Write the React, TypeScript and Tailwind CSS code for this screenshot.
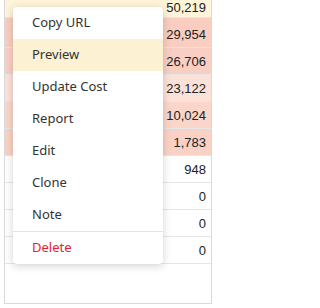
import React from 'react';

interface Row {
  value: string;
  bg: string;
  h: string;
}

const rows: Row[] = [
  { value: '29,954', bg: 'bg-[#f9cec1]', h: 'h-[30px] pt-[3px]' },
  { value: '26,706', bg: 'bg-[#f9cfc3]', h: 'h-[27px]' },
  { value: '23,122', bg: 'bg-[#fbe1d8]', h: 'h-[27px]' },
  { value: '10,024', bg: 'bg-[#fad5ca]', h: 'h-[27px]' },
  { value: '1,783', bg: 'bg-[#fad1c5]', h: 'h-[27px]' },
  { value: '948', bg: 'bg-white', h: 'h-[27px]' },
  { value: '0', bg: 'bg-white', h: 'h-[27px]' },
  { value: '0', bg: 'bg-white', h: 'h-[27px]' },
  { value: '0', bg: 'bg-white', h: 'h-[27px]' },
];

const menuItems = ['Copy URL', 'Preview', 'Update Cost', 'Report', 'Edit', 'Clone', 'Note'];

export default function App() {
  return (
    <div className="relative w-[216px] h-[308px] bg-white overflow-hidden">
      {/* table */}
      <div className="ml-[4px] w-[208px] h-[304px] border border-t-0 border-[#d9d9d9] overflow-hidden font-['Liberation_Sans',Arial,sans-serif] text-[13px] text-[#222]">
        <div className="flex h-[18px] items-center border-b border-[#e6e6e6] bg-[#fdf4d9] pb-[3px] pr-[5px]">
          <div className="flex-1 overflow-hidden pl-[71px]">
            <span className="block -mt-[14px] leading-[13px] font-semibold">Leatherhead</span>
          </div>
          <span className="leading-none">50,219</span>
        </div>
        {rows.map((row, i) => (
          <div
            key={i}
            className={`flex items-center justify-end border-b border-[#e6e6e6] pr-[5px] ${row.bg} ${row.h}`}
          >
            <span className="leading-none">{row.value}</span>
          </div>
        ))}
      </div>

      {/* context menu */}
      <div className="absolute left-[13px] top-[7px] w-[150px] rounded-[4px] bg-white shadow-[0_2px_8px_rgba(0,0,0,0.18)] font-['Noto_Sans',sans-serif] text-[13px] text-[#333] overflow-hidden">
        {menuItems.map((item) => (
          <div
            key={item}
            className={`flex h-[32px] items-center pl-[19px] ${item === 'Preview' ? 'bg-[#fcf1d3]' : ''}`}
          >
            {item}
          </div>
        ))}
        <div className="h-px bg-[#e3e3e3]" />
        <div className="flex h-[32px] items-center pl-[19px] text-[#e8202e]">Delete</div>
      </div>
    </div>
  );
}
